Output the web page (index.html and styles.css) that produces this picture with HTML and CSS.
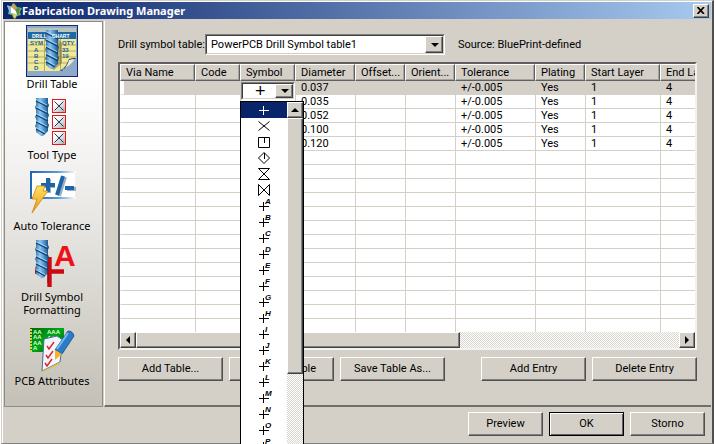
FILE: index.html
```html
<!DOCTYPE html>
<html lang="en">
<head>
    <meta charset="UTF-8">
    <meta name="viewport" content="width=device-width, initial-scale=1.0">
    <title>Fabrication Drawing Manager</title>
    <link rel="stylesheet" href="styles.css">
</head>
<body>
    <!-- shared shapes -->
    <svg class="defs" width="0" height="0" aria-hidden="true">
        <defs>
            <linearGradient id="steel" x1="0" x2="1" y1="0" y2="0">
                <stop offset="0" stop-color="#2a659f"/>
                <stop offset="0.35" stop-color="#8cc8f0"/>
                <stop offset="0.65" stop-color="#4a94d0"/>
                <stop offset="1" stop-color="#1d4672"/>
            </linearGradient>
            <linearGradient id="bolt" x1="0" x2="0" y1="0" y2="1">
                <stop offset="0" stop-color="#ffe060"/>
                <stop offset="1" stop-color="#f09a10"/>
            </linearGradient>
            <linearGradient id="frame" x1="0" x2="1" y1="0" y2="0">
                <stop offset="0" stop-color="#1d66ae"/>
                <stop offset="0.6" stop-color="#5c9ad0"/>
                <stop offset="1" stop-color="#ffffff"/>
            </linearGradient>
            <linearGradient id="tile" x1="0" x2="1" y1="0" y2="1">
                <stop offset="0.3" stop-color="#ffffff"/>
                <stop offset="1" stop-color="#a8a8a8"/>
            </linearGradient>
            <linearGradient id="board" x1="0" x2="1" y1="0" y2="1">
                <stop offset="0" stop-color="#006a00"/>
                <stop offset="0.5" stop-color="#00a818"/>
                <stop offset="1" stop-color="#005800"/>
            </linearGradient>
            <symbol id="drill" viewBox="0 0 14 38" preserveAspectRatio="none">
                <path d="M1 0h12v5l1 2-1 3v5l1 2-1 3v5l1 2-1 3v3L8 38H6L1 34v-4l-1-2 1-2v-5l-1-2 1-2v-5L0 9l1-2z" fill="url(#steel)"/>
                <path d="M1 3l12 6M1 10l12 6M1 17l12 6M1 24l12 6M1 31l9 5" stroke="#173f6b" stroke-width="1.3"/>
                <path d="M1 1.500l11 5.500M1 8.500l11 5.500M1 15.500l11 5.500M1 22.500l11 5.500M1 29.500l9 5" stroke="#b6e0f8" stroke-width="0.800"/>
            </symbol>
            <symbol id="cross-tile" viewBox="0 0 14 14">
                <rect x="0.500" y="0.500" width="13" height="13" fill="url(#tile)" stroke="#e01818"/>
                <path d="M2.500 2.500l9 9M11.500 2.500l-9 9" stroke="#1c3c64"/>
            </symbol>
            <symbol id="plus" viewBox="0 0 16 16">
                <path d="M3 8.500h10M7.500 4v9" stroke="currentColor"/>
            </symbol>
        </defs>
    </svg>

    <div class="window">
        <header class="titlebar">
            <svg class="app-icon" width="16" height="16" viewBox="0 0 16 16" aria-hidden="true">
                <path d="M8 0l3 4 5 1-2 4 1 3-4 1-3 3-2-4-4-1 1-4-2-4 5 0z" fill="#6fae7c"/>
                <path d="M1 2l5 2 2 4-4 3z" fill="#8bb8e8"/>
                <path d="M7 0l3 4-2 4-3-4z" fill="#d8a050"/>
                <path d="M9 7l5-3-1 6-3 3z" fill="#5a8a3a"/>
                <path d="M5 4l5 4 1 4-6-2z" fill="#ffffff"/>
                <path d="M8 10l3 2-2 4-2-3z" fill="#e8cc58"/>
            </svg>
            <h1>Fabrication Drawing Manager</h1>
            <button type="button" class="close" aria-label="Close">
                <svg width="8" height="7" viewBox="0 0 8 7"><path d="M0.500 0l6.500 7M7 0L0.500 7" stroke="#000" stroke-width="1.700"/></svg>
            </button>
        </header>

        <div class="main">
            <nav class="sidebar">
                <a href="#drill-table" class="tool active">
                    <svg width="52" height="52" viewBox="0 0 52 52" aria-hidden="true">
                        <rect width="52" height="52" fill="#8fa9c8"/>
                        <rect x="2" y="3" width="48" height="4" fill="#b9c4bd"/>
                        <rect x="2" y="7" width="48" height="39" fill="#f1e99a"/>
                        <rect x="2" y="7" width="48" height="7" fill="#1d68a5"/>
                        <path d="M2 20h48M2 26h48M2 32h48M2 38h48" stroke="#b8ab58"/>
                        <path d="M18.500 14v32M34.500 14v32" stroke="#b8ab58"/>
                        <path d="M32 14l4 4v20l-8 7-6-3z" fill="#6a6a38" opacity="0.5"/>
                        <use href="#drill" x="19" y="5" width="14" height="39"/>
                        <g class="chart-text">
                            <text x="6" y="13" fill="#fff" class="chart-head">DRILL</text>
                            <text x="26" y="13" fill="#fff" class="chart-head">CHART</text>
                            <text x="4" y="20">SYM</text>
                            <text x="36" y="20">QTY</text>
                            <text x="8" y="27">A</text>
                            <text x="8" y="33">B</text>
                            <text x="8" y="39">C</text>
                            <text x="8" y="45">D</text>
                            <text x="36" y="27">33</text>
                            <text x="36" y="33">19</text>
                        </g>
                        <path d="M50 33v13H33z" fill="#8fa9c8"/>
                        <path d="M50 33q-4 0-7 1-2 6-7 12h-2q8-4 16-13z" fill="#302c24"/>
                        <path d="M49 34q-4 0-6 1-1 4-4 8 6-3 10-9z" fill="#e8e8e0"/>
                        <rect x="0.500" y="0.500" width="51" height="51" fill="none" stroke="#14296e"/>
                    </svg>
                    <span>Drill Table</span>
                </a>
                <a href="#tool-type" class="tool">
                    <svg width="52" height="52" viewBox="0 0 52 52" aria-hidden="true">
                        <use href="#drill" x="9" y="2" width="14" height="38"/>
                        <use href="#cross-tile" x="26" y="3" width="14" height="14"/>
                        <use href="#cross-tile" x="26" y="19" width="14" height="14"/>
                        <use href="#cross-tile" x="26" y="35" width="14" height="14"/>
                    </svg>
                    <span>Tool Type</span>
                </a>
                <a href="#auto-tolerance" class="tool">
                    <svg width="52" height="52" viewBox="0 0 52 52" aria-hidden="true">
                        <path d="M5 5h44v26H5z" fill="#fff"/>
                        <path d="M4 4h46v2H6v24h44v2H4z" fill="url(#frame)"/>
                        <path d="M15 19h14M23 12v14M33 29l6-19M41 22h9" stroke="#9ab0c4" stroke-width="4"/>
                        <path d="M15 18h14M22 11v14M31 28l6-19M39 21h9" stroke="#1d65a8" stroke-width="4"/>
                        <path d="M11 19h8l-2 5h5L6 46l5-14H6z" fill="url(#bolt)" stroke="#c98518" stroke-width="0.800"/>
                    </svg>
                    <span>Auto Tolerance</span>
                </a>
                <a href="#drill-symbol-formatting" class="tool">
                    <svg width="52" height="52" viewBox="0 0 52 52" aria-hidden="true">
                        <path d="M23.500 19v30M9 33.500h29" stroke="#cc0a10" stroke-width="4.400"/>
                        <use href="#drill" x="9" y="2" width="14" height="38"/>
                        <path d="M22 25v20" stroke="#7a1020" stroke-width="1"/>
                        <text class="red-letter" x="28" y="28">A</text>
                    </svg>
                    <span>Drill Symbol Formatting</span>
                </a>
                <a href="#pcb-attributes" class="tool">
                    <svg width="52" height="52" viewBox="0 0 52 52" aria-hidden="true">
                        <rect x="4" y="6" width="34" height="24" fill="url(#board)"/>
                        <path d="M5 7v23" stroke="#e8d040" stroke-width="2" stroke-dasharray="2 1"/>
                        <g class="board-text">
                            <text x="7" y="12">AA</text>
                            <text x="21" y="12">AAA</text>
                            <text x="7" y="17">AA</text>
                            <text x="21" y="18">AA</text>
                            <text x="7" y="23">AA</text>
                            <text x="7" y="28">A</text>
                        </g>
                        <path d="M18 17l13-3 6 4-3 22-18 9z" fill="#f2f6fc" stroke="#4a6c98"/>
                        <path d="M16 49l18-9v2l-17 8z" fill="#d8c058"/>
                        <path d="M21 24l2 3 5-7M20 33l2 3 5-7M19 41l2 3 5-7" fill="none" stroke="#e02020" stroke-width="1.400"/>
                        <path d="M42 9q5 0 6 5L36 32l-7-4z" fill="#2a7cc8" stroke="#14508c" stroke-width="0.800"/>
                        <path d="M42 11l-11 16" stroke="#78b8ec" stroke-width="2"/>
                        <path d="M29 28l7 4-7 6z" fill="#f4b428"/>
                    </svg>
                    <span>PCB Attributes</span>
                </a>
            </nav>

            <main class="panel">
                <div class="source-row">
                    <label for="symbolTable">Drill symbol table:</label>
                    <span class="combo">
                        <select id="symbolTable">
                            <option>PowerPCB Drill Symbol table1</option>
                        </select>
                    </span>
                    <span class="source">Source: BluePrint-defined</span>
                </div>

                <div class="list">
                    <div class="list-view">
                        <table>
                            <colgroup>
                                <col class="w75"><col class="w45"><col class="w55"><col class="w60"><col class="w50">
                                <col class="w50"><col class="w80"><col class="w50"><col class="w75"><col class="w75">
                            </colgroup>
                            <thead>
                                <tr><th>Via Name</th><th>Code</th><th>Symbol</th><th>Diameter</th><th>Offset...</th><th>Orient...</th><th>Tolerance</th><th>Plating</th><th>Start Layer</th><th>End Layer</th></tr>
                            </thead>
                            <tbody>
                                <tr class="selected">
                                    <td></td><td></td>
                                    <td class="edit-cell">
                                        <span class="combo small">
                                            <select aria-label="Symbol"><option>+</option></select>
                                        </span>
                                    </td>
                                    <td>0.037</td><td></td><td></td><td>+/-0.005</td><td>Yes</td><td>1</td><td>4</td>
                                </tr>
                                <tr><td></td><td></td><td></td><td>0.035</td><td></td><td></td><td>+/-0.005</td><td>Yes</td><td>1</td><td>4</td></tr>
                                <tr><td></td><td></td><td></td><td>0.052</td><td></td><td></td><td>+/-0.005</td><td>Yes</td><td>1</td><td>4</td></tr>
                                <tr><td></td><td></td><td></td><td>0.100</td><td></td><td></td><td>+/-0.005</td><td>Yes</td><td>1</td><td>4</td></tr>
                                <tr><td></td><td></td><td></td><td>0.120</td><td></td><td></td><td>+/-0.005</td><td>Yes</td><td>1</td><td>4</td></tr>
                                <tr><td></td><td></td><td></td><td></td><td></td><td></td><td></td><td></td><td></td><td></td></tr>
                                <tr><td></td><td></td><td></td><td></td><td></td><td></td><td></td><td></td><td></td><td></td></tr>
                                <tr><td></td><td></td><td></td><td></td><td></td><td></td><td></td><td></td><td></td><td></td></tr>
                                <tr><td></td><td></td><td></td><td></td><td></td><td></td><td></td><td></td><td></td><td></td></tr>
                                <tr><td></td><td></td><td></td><td></td><td></td><td></td><td></td><td></td><td></td><td></td></tr>
                                <tr><td></td><td></td><td></td><td></td><td></td><td></td><td></td><td></td><td></td><td></td></tr>
                                <tr><td></td><td></td><td></td><td></td><td></td><td></td><td></td><td></td><td></td><td></td></tr>
                                <tr><td></td><td></td><td></td><td></td><td></td><td></td><td></td><td></td><td></td><td></td></tr>
                                <tr><td></td><td></td><td></td><td></td><td></td><td></td><td></td><td></td><td></td><td></td></tr>
                                <tr><td></td><td></td><td></td><td></td><td></td><td></td><td></td><td></td><td></td><td></td></tr>
                                <tr><td></td><td></td><td></td><td></td><td></td><td></td><td></td><td></td><td></td><td></td></tr>
                                <tr><td></td><td></td><td></td><td></td><td></td><td></td><td></td><td></td><td></td><td></td></tr>
                                <tr><td></td><td></td><td></td><td></td><td></td><td></td><td></td><td></td><td></td><td></td></tr>
                            </tbody>
                        </table>
                    </div>
                    <div class="hscroll">
                        <button type="button" class="scroll-btn left" aria-label="Scroll left"></button>
                        <div class="thumb"></div>
                        <button type="button" class="scroll-btn right" aria-label="Scroll right"></button>
                    </div>

                    <!-- open symbol list -->
                    <div class="popup">
                        <ul role="listbox" aria-label="Symbols">
                            <li role="option" aria-selected="true" class="current"><svg width="16" height="16"><use href="#plus"/></svg></li>
                            <li role="option"><svg width="16" height="16"><path d="M2.500 3.500l11 9M13.500 3.500l-11 9"/></svg></li>
                            <li role="option"><svg width="16" height="16"><path d="M2.500 3.500h11v10h-11zM8.500 3v6"/></svg></li>
                            <li role="option"><svg width="16" height="16"><path d="M8 2.500l5.500 5.500L8 13.500 2.500 8zM8.500 3v6"/></svg></li>
                            <li role="option"><svg width="16" height="16"><path d="M2.500 2.500h11l-11 11h11z"/></svg></li>
                            <li role="option"><svg width="16" height="16"><path d="M2.500 2.500v11l11-11v11z"/></svg></li>
                            <li role="option"><svg width="16" height="16"><use href="#plus"/></svg><sup>A</sup></li>
                            <li role="option"><svg width="16" height="16"><use href="#plus"/></svg><sup>B</sup></li>
                            <li role="option"><svg width="16" height="16"><use href="#plus"/></svg><sup>C</sup></li>
                            <li role="option"><svg width="16" height="16"><use href="#plus"/></svg><sup>D</sup></li>
                            <li role="option"><svg width="16" height="16"><use href="#plus"/></svg><sup>E</sup></li>
                            <li role="option"><svg width="16" height="16"><use href="#plus"/></svg><sup>F</sup></li>
                            <li role="option"><svg width="16" height="16"><use href="#plus"/></svg><sup>G</sup></li>
                            <li role="option"><svg width="16" height="16"><use href="#plus"/></svg><sup>H</sup></li>
                            <li role="option"><svg width="16" height="16"><use href="#plus"/></svg><sup>I</sup></li>
                            <li role="option"><svg width="16" height="16"><use href="#plus"/></svg><sup>J</sup></li>
                            <li role="option"><svg width="16" height="16"><use href="#plus"/></svg><sup>K</sup></li>
                            <li role="option"><svg width="16" height="16"><use href="#plus"/></svg><sup>L</sup></li>
                            <li role="option"><svg width="16" height="16"><use href="#plus"/></svg><sup>M</sup></li>
                            <li role="option"><svg width="16" height="16"><use href="#plus"/></svg><sup>N</sup></li>
                            <li role="option"><svg width="16" height="16"><use href="#plus"/></svg><sup>O</sup></li>
                            <li role="option"><svg width="16" height="16"><use href="#plus"/></svg><sup>P</sup></li>
                        </ul>
                        <div class="vscroll">
                            <button type="button" class="scroll-btn up" aria-label="Scroll up"></button>
                            <div class="thumb"></div>
                        </div>
                    </div>
                </div>

                <div class="actions">
                    <button type="button" class="btn">Add Table...</button>
                    <button type="button" class="btn">Rename Table</button>
                    <button type="button" class="btn">Save Table As...</button>
                    <button type="button" class="btn push">Add Entry</button>
                    <button type="button" class="btn">Delete Entry</button>
                </div>
            </main>
        </div>

        <footer class="footer">
            <button type="button" class="btn">Preview</button>
            <button type="button" class="btn default">OK</button>
            <button type="button" class="btn">Storno</button>
        </footer>
    </div>
</body>
</html>
```

FILE: styles.css
```css
* {
    box-sizing: border-box;
}

body {
    margin: 0;
    padding: 0 2px 0 1px;
    height: 100vh;
    overflow: hidden;
    background: #fff;
    color: #000;
    font-family: Roboto, Arial, sans-serif;
    font-size: 11px;
    line-height: 13px;
}

.defs {
    position: absolute;
}

.window {
    display: flex;
    flex-direction: column;
    height: 100vh;
    background: #d4d0c8;
    border: 1px solid #d4d0c8;
    border-right: 2px solid #505050;
    border-bottom-color: #808080;
    box-shadow: inset 1px 1px #fff;
    padding: 1px;
}

/* title bar */
.titlebar {
    display: flex;
    align-items: center;
    height: 17px;
    padding: 0 2px 0 3px;
    background: linear-gradient(to right, #0a246a, #a6caf0);
    flex: none;
}

.titlebar h1 {
    flex: 1;
    margin: 0;
    color: #fff;
    font: bold 11px/16px "Noto Sans", Tahoma, sans-serif;
}

.close,
.scroll-btn,
.thumb {
    background: #d4d0c8;
    border: 1px solid;
    border-color: #fff #404040 #404040 #fff;
    box-shadow: inset -1px -1px #808080;
}

.close {
    display: flex;
    align-items: center;
    justify-content: center;
    width: 16px;
    height: 14px;
    padding: 0;
}

/* left tools */
.main {
    flex: 1;
    display: flex;
    min-height: 0;
    padding-top: 2px;
}

.sidebar {
    display: flex;
    flex-direction: column;
    gap: 6px;
    width: 99px;
    margin-left: 1px;
    padding-top: 3px;
    border: 1px solid #8c8c88;
    background: linear-gradient(#fff 15%, #f1f0ee 40%, #c4c0b6);
    flex: none;
}

.tool {
    display: flex;
    flex-direction: column;
    align-items: center;
    padding: 0 16px 0 13px;
    color: #000;
    font: 11px/13px "Noto Sans", Tahoma, sans-serif;
    text-align: center;
    text-decoration: none;
}

.tool svg {
    flex: none;
}

.tool span {
    margin: 0 -12px;
    max-width: 78px;
}

.chart-text {
    font: bold 6px "Liberation Sans", Arial, sans-serif;
    fill: #1a609c;
}

.chart-head {
    font-size: 5px;
    fill: #fff;
}

.board-text {
    font: bold 6px "Liberation Sans", Arial, sans-serif;
    fill: #d8ffd8;
}

.red-letter {
    font: bold 30px "Liberation Sans", Arial, sans-serif;
    fill: #f01018;
}

/* right panel */
.panel {
    flex: 1;
    display: flex;
    flex-direction: column;
    min-width: 0;
    padding: 13px 14px 24px 13px;
    border-left: 1px solid #fff;
    border-bottom: 2px solid #707068;
    margin-left: 1px;
}

.source-row {
    display: flex;
    align-items: center;
    height: 21px;
    margin-bottom: 7px;
}

.source-row label {
    width: 87px;
    white-space: nowrap;
}

.combo {
    position: relative;
    display: block;
    width: 240px;
    height: 21px;
    border: 1px solid;
    border-color: #808080 #fff #fff #808080;
}

.combo select {
    display: block;
    width: 100%;
    height: 100%;
    padding: 0 18px 0 4px;
    border: 1px solid;
    border-color: #404040 #d4d0c8 #d4d0c8 #404040;
    border-radius: 0;
    background: #fff;
    color: #000;
    font: inherit;
    appearance: none;
    outline: none;
}

.combo::before {
    content: "";
    position: absolute;
    top: 1px;
    right: 1px;
    bottom: 1px;
    width: 16px;
    background: #d4d0c8;
    border: 1px solid;
    border-color: #fff #404040 #404040 #fff;
    box-shadow: inset -1px -1px #808080;
    pointer-events: none;
}

.combo::after {
    content: "";
    position: absolute;
    top: 50%;
    right: 5px;
    margin-top: -2px;
    border: 4px solid transparent;
    border-top-color: #000;
    border-bottom: 0;
    pointer-events: none;
}

.source {
    margin-left: 13px;
}

/* list */
.list {
    position: relative;
    flex: 1;
    display: flex;
    flex-direction: column;
    min-height: 0;
    border: 2px solid;
    border-color: #606060 #f4f2ee #f4f2ee #606060;
    background: #fff;
}

.list-view {
    flex: 1;
    min-height: 0;
    overflow: hidden;
}

table {
    table-layout: fixed;
    width: 615px;
    border-collapse: separate;
    border-spacing: 0;
}

.w45 { width: 45px; }
.w50 { width: 50px; }
.w55 { width: 55px; }
.w60 { width: 60px; }
.w75 { width: 75px; }
.w80 { width: 80px; }

th {
    height: 17px;
    padding: 0 0 0 5px;
    background: #d4d0c8;
    border: 1px solid;
    border-color: #fff #606060 #606060 #fff;
    box-shadow: inset -1px -1px #a8a49c;
    font-weight: normal;
    text-align: left;
    white-space: nowrap;
}

td {
    height: 14px;
    padding: 0 0 0 5px;
    border-left: 1px solid #d4d0c8;
    border-bottom: 1px solid #d4d0c8;
    white-space: nowrap;
}

td:first-child {
    border-left-color: #fff;
}

.selected td {
    background: #d4d0c8;
}

.selected td:first-child {
    border-left: 4px solid #fff;
}

td.edit-cell {
    position: relative;
}

.combo.small {
    position: absolute;
    top: 1px;
    left: 0;
    width: 54px;
    height: 18px;
}

.combo.small select {
    padding: 0 0 0 12px;
    font: 18px/14px "Liberation Sans", Arial, sans-serif;
}

/* scrollbars */
.hscroll {
    display: flex;
    height: 16px;
    flex: none;
}

.hscroll,
.vscroll {
    background: repeating-conic-gradient(#fff 0 25%, #d8d5ce 0 50%) 0 0 / 2px 2px;
}

.hscroll .thumb {
    width: 324px;
}

.scroll-btn {
    display: flex;
    align-items: center;
    justify-content: center;
    width: 16px;
    height: 16px;
    padding: 0;
    flex: none;
}

.scroll-btn::after {
    content: "";
    border: 4px solid transparent;
}

.scroll-btn.left::after {
    border-right-color: #000;
    border-left: 0;
}

.scroll-btn.right {
    margin-left: auto;
}

.scroll-btn.right::after {
    border-left-color: #000;
    border-right: 0;
}

.scroll-btn.up::after {
    border-bottom-color: #000;
    border-top: 0;
}

/* symbol drop-down */
.popup {
    position: absolute;
    top: 37px;
    left: 120px;
    display: flex;
    width: 64px;
    border: 1px solid #000;
    background: #fff;
}

.popup ul {
    flex: 1;
    margin: 0;
    padding: 0;
    list-style: none;
}

.popup li {
    position: relative;
    display: flex;
    justify-content: center;
    height: 16px;
}

.popup li svg {
    fill: none;
    stroke: currentColor;
}

.popup sup {
    position: absolute;
    top: 0;
    left: 24px;
    font: italic bold 8px/8px "Liberation Sans", Arial, sans-serif;
}

.popup .current {
    background: #0a246a;
    color: #fff;
}

.vscroll {
    width: 16px;
}

.vscroll .thumb {
    height: 256px;
}

/* buttons */
.actions {
    display: flex;
    gap: 6px;
    margin-top: 7px;
}

.btn {
    width: 105px;
    height: 24px;
    padding: 0 0 2px;
    border: 1px solid;
    border-color: #fff #505050 #505050 #fff;
    box-shadow: inset -1px -1px #808080;
    background: #d4d0c8;
    color: #000;
    font: inherit;
    white-space: nowrap;
}

.push {
    margin-left: auto;
}

.footer {
    display: flex;
    justify-content: flex-end;
    gap: 6px;
    padding: 5px 6px 6px;
    flex: none;
}

.footer .btn {
    width: 75px;
}

.footer .default {
    border-color: #000;
    box-shadow: inset 1px 1px #fff, inset -1px -1px #606060;
}
```
